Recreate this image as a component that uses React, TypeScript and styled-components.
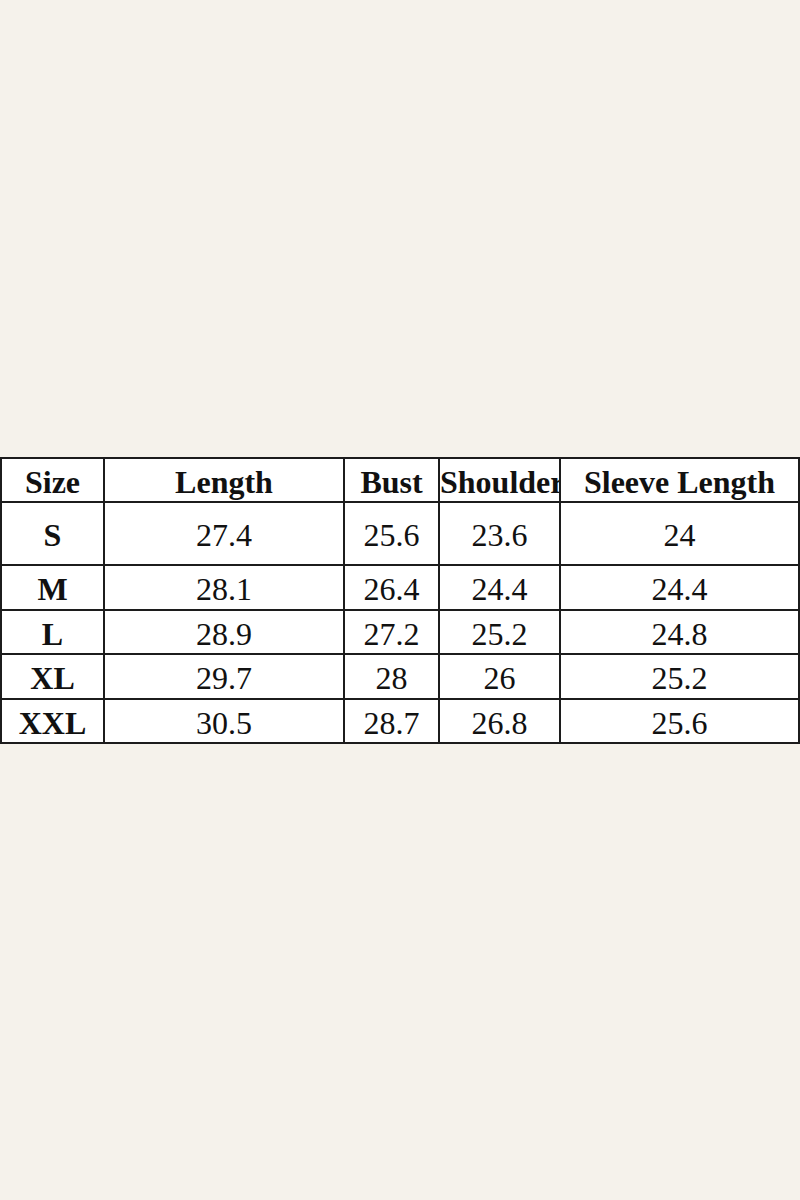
import styled, { createGlobalStyle } from "styled-components";

const GlobalStyle = createGlobalStyle`
  html, body {
    margin: 0;
    padding: 0;
    background-color: #f5f2eb;
  }
`;

const Page = styled.div`
  height: 1200px;
  display: flex;
  flex-direction: column;
  justify-content: center;
`;

const SizeTable = styled.table`
  width: 798px;
  table-layout: fixed;
  border-collapse: collapse;
  background-color: #ffffff;
  font-family: "Liberation Serif", "Times New Roman", serif;
  font-size: 32px;
  color: #111111;
`;

const Row = styled.tr<{ $height: number }>`
  height: ${(p) => p.$height}px;
`;

const HeadCell = styled.th`
  border: 2px solid #1c1c1c;
  padding: 4px 0 0;
  font-weight: bold;
  text-align: center;
  vertical-align: middle;
  white-space: nowrap;
  overflow: hidden;
  line-height: 1;
`;

const Cell = styled.td<{ $bold?: boolean }>`
  border: 2px solid #1c1c1c;
  padding: 4px 0 0;
  text-align: center;
  vertical-align: middle;
  white-space: nowrap;
  overflow: hidden;
  line-height: 1;
  font-weight: ${(p) => (p.$bold ? "bold" : "normal")};
`;

const columns = [103, 240, 95, 121, 239];
const headers = ["Size", "Length", "Bust", "Shoulder", "Sleeve Length"];

const rows = [
  { size: "S", values: ["27.4", "25.6", "23.6", "24"], height: 63 },
  { size: "M", values: ["28.1", "26.4", "24.4", "24.4"], height: 45 },
  { size: "L", values: ["28.9", "27.2", "25.2", "24.8"], height: 44 },
  { size: "XL", values: ["29.7", "28", "26", "25.2"], height: 45 },
  { size: "XXL", values: ["30.5", "28.7", "26.8", "25.6"], height: 44 },
];

const App = () => {
  return (
    <>
      <GlobalStyle />
      <Page>
        <SizeTable>
          <colgroup>
            {columns.map((w, i) => (
              <col key={i} style={{ width: w }} />
            ))}
          </colgroup>
          <thead>
            <Row $height={44}>
              {headers.map((h) => (
                <HeadCell key={h}>{h}</HeadCell>
              ))}
            </Row>
          </thead>
          <tbody>
            {rows.map((r) => (
              <Row key={r.size} $height={r.height}>
                <Cell $bold>{r.size}</Cell>
                {r.values.map((v, i) => (
                  <Cell key={i}>{v}</Cell>
                ))}
              </Row>
            ))}
          </tbody>
        </SizeTable>
      </Page>
    </>
  );
};

export default App;
